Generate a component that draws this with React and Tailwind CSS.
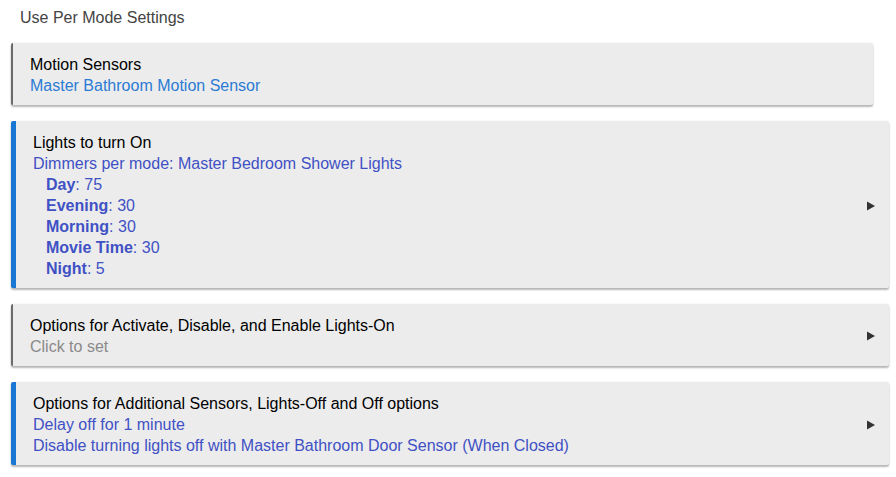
import React from 'react'

const Arrow = () => (
  <svg width="8" height="10" viewBox="0 0 8 10" className="shrink-0">
    <path d="M0 0.5 L8 5 L0 9.5 Z" fill="#333" />
  </svg>
)

const Card = ({ accent, arrow, narrow, children }) => (
  <div
    className={
      'flex items-center bg-[#ececec] rounded-[2px] pl-[17px] pt-[11px] pb-[9px] shadow-[0_2px_2px_rgba(0,0,0,0.28),0_0_2px_rgba(0,0,0,0.08)] ' +
      (accent ? 'border-l-[5px] border-[#1976d2] ' : 'border-l-2 border-[#6b6b6b] ') +
      (narrow ? 'mr-[16px] pr-4' : 'pr-[14px]')
    }
  >
    <div className="flex-1 min-w-0">{children}</div>
    {arrow && <Arrow />}
  </div>
)

const Mode = ({ name, value }) => (
  <div className="pl-[13px] text-[#3f51c5]">
    <span className="font-bold">{name}</span>: {value}
  </div>
)

export default function App() {
  return (
    <div
      className="w-[896px] h-[477px] bg-white text-[16px] leading-[21px] text-black overflow-hidden"
      style={{ fontFamily: '"Liberation Sans", Arial, sans-serif' }}
    >
      <div className="pl-[20px] pt-[7px] h-[43px] text-[#444]">Use Per Mode Settings</div>
      <div className="flex flex-col gap-4 pl-[11px] pr-[7px]">
        <Card narrow>
          <div>Motion Sensors</div>
          <div className="text-[#2b7bd4]">Master Bathroom Motion Sensor</div>
        </Card>
        <Card accent arrow>
          <div>Lights to turn On</div>
          <div className="text-[#3f51c5]">Dimmers per mode: Master Bedroom Shower Lights</div>
          <Mode name="Day" value="75" />
          <Mode name="Evening" value="30" />
          <Mode name="Morning" value="30" />
          <Mode name="Movie Time" value="30" />
          <Mode name="Night" value="5" />
        </Card>
        <Card arrow>
          <div>Options for Activate, Disable, and Enable Lights-On</div>
          <div className="text-[#8a8a8a]">Click to set</div>
        </Card>
        <Card accent arrow>
          <div>Options for Additional Sensors, Lights-Off and Off options</div>
          <div className="text-[#3f51c5]">Delay off for 1 minute</div>
          <div className="text-[#3f51c5]">Disable turning lights off with Master Bathroom Door Sensor (When Closed)</div>
        </Card>
      </div>
    </div>
  )
}
